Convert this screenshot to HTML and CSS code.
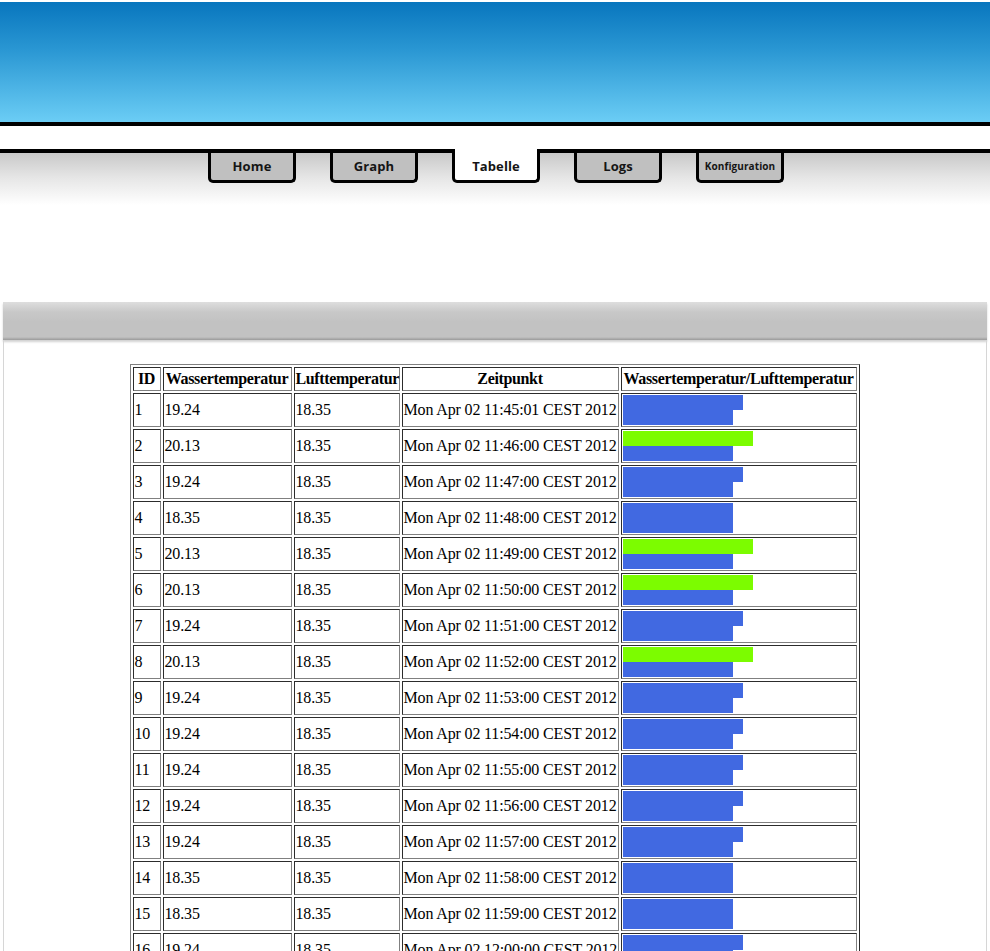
FILE: index.html
```html
<!DOCTYPE html>
<html lang="de">
<head>
<meta charset="utf-8">
<title>Tabelle</title>
<link rel="stylesheet" href="styles.css">
</head>
<body>
<header class="banner"></header>
<div class="strip"></div>
<nav class="tabs">
  <ul class="tab-list">
    <li class="tab"><a href="#">Home</a></li>
    <li class="tab"><a href="#">Graph</a></li>
    <li class="tab tab-active"><a href="#">Tabelle</a></li>
    <li class="tab"><a href="#">Logs</a></li>
    <li class="tab tab-small"><a href="#">Konfiguration</a></li>
  </ul>
</nav>
<main class="main">
  <div class="titlebar"></div>
  <section class="panel">
    <table class="data">
      <thead>
        <tr>
          <th class="c-id">ID</th>
          <th class="c-w">Wassertemperatur</th>
          <th class="c-l">Lufttemperatur</th>
          <th class="c-z">Zeitpunkt</th>
          <th class="c-b">Wassertemperatur/Lufttemperatur</th>
        </tr>
      </thead>
      <tbody>
        <tr><td>1</td><td>19.24</td><td>18.35</td><td>Mon Apr 02 11:45:01 CEST 2012</td><td class="bars"><div class="bar water" style="width:120px"></div><div class="bar air" style="width:110px"></div></td></tr>
        <tr><td>2</td><td>20.13</td><td>18.35</td><td>Mon Apr 02 11:46:00 CEST 2012</td><td class="bars"><div class="bar water high" style="width:130px"></div><div class="bar air" style="width:110px"></div></td></tr>
        <tr><td>3</td><td>19.24</td><td>18.35</td><td>Mon Apr 02 11:47:00 CEST 2012</td><td class="bars"><div class="bar water" style="width:120px"></div><div class="bar air" style="width:110px"></div></td></tr>
        <tr><td>4</td><td>18.35</td><td>18.35</td><td>Mon Apr 02 11:48:00 CEST 2012</td><td class="bars"><div class="bar water" style="width:110px"></div><div class="bar air" style="width:110px"></div></td></tr>
        <tr><td>5</td><td>20.13</td><td>18.35</td><td>Mon Apr 02 11:49:00 CEST 2012</td><td class="bars"><div class="bar water high" style="width:130px"></div><div class="bar air" style="width:110px"></div></td></tr>
        <tr><td>6</td><td>20.13</td><td>18.35</td><td>Mon Apr 02 11:50:00 CEST 2012</td><td class="bars"><div class="bar water high" style="width:130px"></div><div class="bar air" style="width:110px"></div></td></tr>
        <tr><td>7</td><td>19.24</td><td>18.35</td><td>Mon Apr 02 11:51:00 CEST 2012</td><td class="bars"><div class="bar water" style="width:120px"></div><div class="bar air" style="width:110px"></div></td></tr>
        <tr><td>8</td><td>20.13</td><td>18.35</td><td>Mon Apr 02 11:52:00 CEST 2012</td><td class="bars"><div class="bar water high" style="width:130px"></div><div class="bar air" style="width:110px"></div></td></tr>
        <tr><td>9</td><td>19.24</td><td>18.35</td><td>Mon Apr 02 11:53:00 CEST 2012</td><td class="bars"><div class="bar water" style="width:120px"></div><div class="bar air" style="width:110px"></div></td></tr>
        <tr><td>10</td><td>19.24</td><td>18.35</td><td>Mon Apr 02 11:54:00 CEST 2012</td><td class="bars"><div class="bar water" style="width:120px"></div><div class="bar air" style="width:110px"></div></td></tr>
        <tr><td>11</td><td>19.24</td><td>18.35</td><td>Mon Apr 02 11:55:00 CEST 2012</td><td class="bars"><div class="bar water" style="width:120px"></div><div class="bar air" style="width:110px"></div></td></tr>
        <tr><td>12</td><td>19.24</td><td>18.35</td><td>Mon Apr 02 11:56:00 CEST 2012</td><td class="bars"><div class="bar water" style="width:120px"></div><div class="bar air" style="width:110px"></div></td></tr>
        <tr><td>13</td><td>19.24</td><td>18.35</td><td>Mon Apr 02 11:57:00 CEST 2012</td><td class="bars"><div class="bar water" style="width:120px"></div><div class="bar air" style="width:110px"></div></td></tr>
        <tr><td>14</td><td>18.35</td><td>18.35</td><td>Mon Apr 02 11:58:00 CEST 2012</td><td class="bars"><div class="bar water" style="width:110px"></div><div class="bar air" style="width:110px"></div></td></tr>
        <tr><td>15</td><td>18.35</td><td>18.35</td><td>Mon Apr 02 11:59:00 CEST 2012</td><td class="bars"><div class="bar water" style="width:110px"></div><div class="bar air" style="width:110px"></div></td></tr>
        <tr><td>16</td><td>19.24</td><td>18.35</td><td>Mon Apr 02 12:00:00 CEST 2012</td><td class="bars"><div class="bar water" style="width:120px"></div><div class="bar air" style="width:110px"></div></td></tr>
      </tbody>
    </table>
  </section>
</main>
</body>
</html>
```
FILE: styles.css
```css
html, body {
  margin: 0;
  padding: 0;
  background: #ffffff;
}

body {
  padding-top: 2px;
  font-family: "Liberation Serif", "Times New Roman", serif;
}

.banner {
  height: 120px;
  background: linear-gradient(to bottom, #0876be 0%, #2a97d3 40%, #6bcdf5 100%);
  border-bottom: 4px solid #000;
}

.strip {
  height: 23px;
  background: #fff;
}

.tabs {
  border-top: 4px solid #000;
  height: 149px;
  background: linear-gradient(to bottom, #c9c9c9 0px, #e6e6e6 25px, #ffffff 52px, #ffffff 100%);
}

.tab-list {
  list-style: none;
  margin: 0;
  padding: 0;
  display: flex;
  justify-content: center;
  gap: 34px;
  padding-left: 2px;
}

.tab {
  box-sizing: border-box;
  width: 88px;
  height: 30px;
  padding-bottom: 2px;
  background: #c0c0c0;
  border: 3px solid #000;
  border-top: none;
  border-radius: 0 0 5px 5px;
  display: flex;
  align-items: center;
  justify-content: center;
}

.tab a {
  font-family: "Open Sans", "DejaVu Sans", sans-serif;
  font-weight: 700;
  font-size: 13px;
  color: #151515;
  text-decoration: none;
  letter-spacing: 0.1px;
}

.tab-active {
  height: 34px;
  margin-top: -4px;
  padding-top: 4px;
  background: #ffffff;
}

.tab-small a {
  font-size: 10px;
}

.main {
  margin: 0 3px;
}

.titlebar {
  height: 38px;
  background: linear-gradient(to bottom, #dedede 0px, #c8c8c8 10px, #c2c2c2 20px, #c2c2c2 35px, #9a9a9a 38px);
  box-shadow: 0 2px 2px rgba(0, 0, 0, 0.18);
}

.panel {
  border-left: 1px solid #d6d6d6;
  border-right: 1px solid #d6d6d6;
  padding-top: 24px;
  display: flex;
  justify-content: center;
}

.data {
  table-layout: fixed;
  width: 730px;
  border: 1px outset #808080;
  border-spacing: 2px;
  font-size: 16px;
  color: #000;
  margin-left: -1px;
}

.data th,
.data td {
  border: 1px inset #808080;
  padding: 1px;
  vertical-align: middle;
  white-space: nowrap;
}

.data th {
  font-weight: 700;
  line-height: 20px;
  text-align: center;
  letter-spacing: -0.35px;
}

.data td {
  text-align: left;
  line-height: 18px;
  letter-spacing: -0.15px;
}

.c-id { width: 24px; }
.c-w { width: 125px; }
.c-l { width: 102px; }
.c-z { width: 213px; }
.c-b { width: 232px; }

.data td.bars {
  height: 30px;
  padding: 1px;
}

.bar {
  height: 15px;
}

.bar.water {
  background: #4169e1;
}

.bar.water.high {
  background: #7cfc00;
}

.bar.air {
  background: #4169e1;
}
```
